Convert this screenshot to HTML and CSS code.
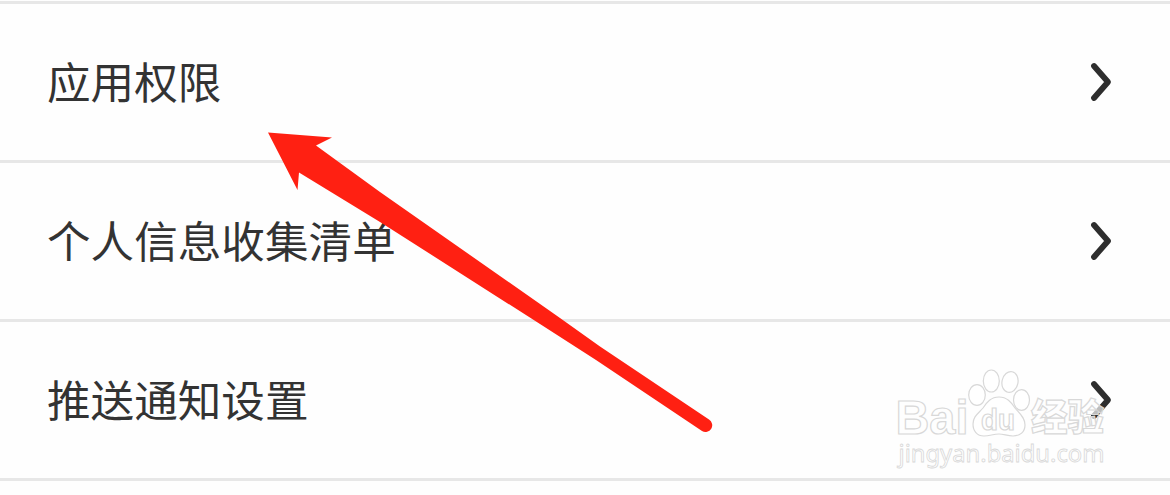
FILE: index.html
```html
<!DOCTYPE html>
<html lang="zh-CN">
<head>
    <meta charset="UTF-8">
    <meta name="viewport" content="width=device-width, initial-scale=1.0">
    <title>隐私设置</title>
    <link rel="stylesheet" href="styles.css">
</head>
<body>
    <main class="settings">
        <a class="settings-item">
            <span class="label">应用权限</span>
            <svg class="chevron" viewBox="0 0 24 42"><path d="M5 5 L19 21 L5 37"/></svg>
        </a>
        <a class="settings-item">
            <span class="label">个人信息收集清单</span>
            <svg class="chevron" viewBox="0 0 24 42"><path d="M5 5 L19 21 L5 37"/></svg>
        </a>
        <a class="settings-item">
            <span class="label">推送通知设置</span>
            <svg class="chevron" viewBox="0 0 24 42"><path d="M5 5 L19 21 L5 37"/></svg>
        </a>
    </main>

    <!-- Arrow pointing at the first item -->
    <svg class="arrow" viewBox="0 0 1170 495">
        <path d="M268 132.500 L332 137.500 L316 145.500 L380 192 L560 318 L600 346.500 L709 419.500 A6.500 6.500 0 0 1 702 431 L596 360 L540 324 L380 222 L299 172.500 L297.500 190 Z"/>
    </svg>

    <!-- Watermark -->
    <svg class="watermark" viewBox="0 0 260 145">
        <text class="brand" x="15.500" y="84" textLength="73" lengthAdjust="spacingAndGlyphs">Bai</text>
        <g class="paw">
            <ellipse cx="97" cy="45" rx="8.300" ry="10.300"/>
            <ellipse cx="111.300" cy="31" rx="8" ry="11"/>
            <ellipse cx="130" cy="32" rx="8" ry="10.500" transform="rotate(12 130 32)"/>
            <ellipse cx="141.500" cy="50" rx="8" ry="10.300"/>
            <path d="M119 47 C127 47 131 52 135 58 C139 63 145 67 145 75 C145 82 140 86 133 86 C127 86 124 84 119 84 C113 84 110 86 104 86 C97 86 93 81 93 74 C93 66 99 63 103 58 C107 52 111 47 119 47 Z"/>
        </g>
        <text class="du" x="101" y="79.500" textLength="34" lengthAdjust="spacingAndGlyphs">du</text>
        <text class="brand-cn" x="151" y="81" textLength="73" lengthAdjust="spacingAndGlyphs">经验</text>
        <text class="site" x="18.500" y="112" textLength="206" lengthAdjust="spacingAndGlyphs">jingyan.baidu.com</text>
    </svg>
</body>
</html>
```

FILE: styles.css
```css
* {
    margin: 0;
    padding: 0;
    box-sizing: border-box;
}
body {
    position: relative;
    height: 495px;
    overflow: hidden;
    background-color: #fefefe;
    font-family: "Noto Sans CJK SC", sans-serif;
    color: #333333;
}

.settings {
    margin-top: 1px;
    border-top: 3px solid #e7e7e7;
}
.settings-item {
    display: flex;
    align-items: center;
    justify-content: space-between;
    height: 159px;
    padding: 0 57px 0 47px;
    border-bottom: 3px solid #e7e7e7;
}
.label {
    font-size: 43.6px;
    line-height: 64px;
    padding-bottom: 5px;
}
.chevron {
    width: 24px;
    height: 42px;
    fill: none;
    stroke: #2e2e2e;
    stroke-width: 5.8;
    stroke-linecap: round;
    stroke-linejoin: round;
}

.arrow {
    position: absolute;
    top: 0;
    left: 0;
    width: 1170px;
    height: 495px;
    fill: #ff2012;
}

.watermark {
    position: absolute;
    top: 350px;
    left: 880px;
    width: 260px;
    height: 145px;
    fill: rgba(255, 255, 255, 0.7);
    stroke: #d8d8d8;
    stroke-width: 1.2;
}
.brand {
    font-family: "Liberation Sans", sans-serif;
    font-size: 48px;
    font-weight: bold;
}
.du {
    font-family: "Liberation Sans", sans-serif;
    font-size: 29px;
    font-weight: bold;
}
.brand-cn {
    font-size: 37px;
    font-weight: 900;
}
.site {
    font-family: "Noto Sans", sans-serif;
    font-size: 24px;
    stroke-width: 0.8;
}
```
